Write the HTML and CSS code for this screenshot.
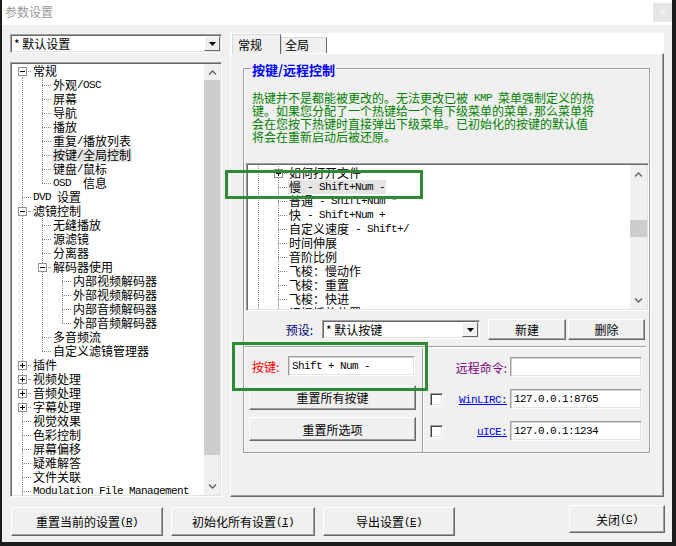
FILE: index.html
```html
<!DOCTYPE html>
<html lang="zh-CN">
<head>
    <meta charset="UTF-8">
    <title>参数设置</title>
    <link rel="stylesheet" href="styles.css">
</head>
<body>
<div class="window">
    <div class="titlebar">
        <span class="title">参数设置</span>
        <span class="close">x</span>
    </div>

    <div class="body">
        <div class="main">
            <div class="side">
                <div class="combo">
                    <span class="val">* 默认设置</span>
                    <span class="drop"><svg width="7" height="4" viewBox="0 0 7 4"><path d="M0 0h7L3.5 4z" fill="#000"/></svg></span>
                </div>
                <div class="tree side-tree">
                    <div class="rows">
                        <div class="row"><span class="c f"><b class="bx"></b></span><span class="tx">常规</span></div>
                        <div class="row"><span class="c v"></span><span class="c t"></span><span class="tx">外观<span class="m">/OSC</span></span></div>
                        <div class="row"><span class="c v"></span><span class="c t"></span><span class="tx">屏幕</span></div>
                        <div class="row"><span class="c v"></span><span class="c t"></span><span class="tx">导航</span></div>
                        <div class="row"><span class="c v"></span><span class="c t"></span><span class="tx">播放</span></div>
                        <div class="row"><span class="c v"></span><span class="c t"></span><span class="tx">重复<span class="m">/</span>播放列表</span></div>
                        <div class="row"><span class="c v"></span><span class="c t"></span><span class="tx sel">按键<span class="m">/</span>全局控制</span></div>
                        <div class="row"><span class="c v"></span><span class="c t"></span><span class="tx">键盘<span class="m">/</span>鼠标</span></div>
                        <div class="row"><span class="c v"></span><span class="c l"></span><span class="tx"><span class="m">OSD  </span>信息</span></div>
                        <div class="row"><span class="c t"></span><span class="tx"><span class="m">DVD </span>设置</span></div>
                        <div class="row"><span class="c t"><b class="bx"></b></span><span class="tx">滤镜控制</span></div>
                        <div class="row"><span class="c v"></span><span class="c t"></span><span class="tx">无缝播放</span></div>
                        <div class="row"><span class="c v"></span><span class="c t"></span><span class="tx">源滤镜</span></div>
                        <div class="row"><span class="c v"></span><span class="c t"></span><span class="tx">分离器</span></div>
                        <div class="row"><span class="c v"></span><span class="c t"><b class="bx"></b></span><span class="tx">解码器使用</span></div>
                        <div class="row"><span class="c v"></span><span class="c v"></span><span class="c t"></span><span class="tx">内部视频解码器</span></div>
                        <div class="row"><span class="c v"></span><span class="c v"></span><span class="c t"></span><span class="tx">外部视频解码器</span></div>
                        <div class="row"><span class="c v"></span><span class="c v"></span><span class="c t"></span><span class="tx">内部音频解码器</span></div>
                        <div class="row"><span class="c v"></span><span class="c v"></span><span class="c l"></span><span class="tx">外部音频解码器</span></div>
                        <div class="row"><span class="c v"></span><span class="c t"></span><span class="tx">多音频流</span></div>
                        <div class="row"><span class="c v"></span><span class="c l"></span><span class="tx">自定义滤镜管理器</span></div>
                        <div class="row"><span class="c t"><b class="bx p"></b></span><span class="tx">插件</span></div>
                        <div class="row"><span class="c t"><b class="bx p"></b></span><span class="tx">视频处理</span></div>
                        <div class="row"><span class="c t"><b class="bx p"></b></span><span class="tx">音频处理</span></div>
                        <div class="row"><span class="c t"><b class="bx p"></b></span><span class="tx">字幕处理</span></div>
                        <div class="row"><span class="c t"></span><span class="tx">视觉效果</span></div>
                        <div class="row"><span class="c t"></span><span class="tx">色彩控制</span></div>
                        <div class="row"><span class="c t"></span><span class="tx">屏幕偏移</span></div>
                        <div class="row"><span class="c t"></span><span class="tx">疑难解答</span></div>
                        <div class="row"><span class="c t"></span><span class="tx">文件关联</span></div>
                        <div class="row"><span class="c t"></span><span class="tx"><span class="m">Modulation File Management</span></span></div>
                    </div>
                    <div class="sbar">
                        <span class="arr up"><svg width="9" height="5" viewBox="0 0 9 5"><path d="M1 4.5 4.5 1 8 4.5" fill="none" stroke="#606060" stroke-width="1.3"/></svg></span>
                        <span class="thumb"></span>
                        <span class="arr dn"><svg width="9" height="5" viewBox="0 0 9 5"><path d="M1 .5 4.5 4 8 .5" fill="none" stroke="#606060" stroke-width="1.3"/></svg></span>
                    </div>
                </div>
            </div>

            <div class="tabs">
                <div class="tabstrip">
                    <span class="tab on">常规</span>
                    <span class="tab">全局</span>
                </div>
                <div class="panel">
                    <div class="group">
                        <div class="legend">按键/远程控制</div>
                        <p class="note">热键并不是都能被更改的。无法更改已被<span class="m"> KMP </span>菜单强制定义的热<br>键。如果您分配了一个热键给一个有下级菜单的菜单<span class="m">,</span>那么菜单将<br>会在您按下热键时直接弹出下级菜单。已初始化的按键的默认值<br>将会在重新启动后被还原。</p>

                        <div class="tree keys">
                            <div class="rows">
                                <div class="row"><span class="c v"></span><span class="c t"><b class="bx p"></b></span><span class="tx">如何打开文件</span></div>
                                <div class="row"><span class="c v"></span><span class="c t"></span><span class="tx sel">慢<span class="m"> - Shift+Num -</span></span></div>
                                <div class="row"><span class="c v"></span><span class="c t"></span><span class="tx">普通<span class="m"> - Shift+Num *</span></span></div>
                                <div class="row"><span class="c v"></span><span class="c t"></span><span class="tx">快<span class="m"> - Shift+Num +</span></span></div>
                                <div class="row"><span class="c v"></span><span class="c t"></span><span class="tx">自定义速度<span class="m"> - Shift+/</span></span></div>
                                <div class="row"><span class="c v"></span><span class="c t"></span><span class="tx">时间伸展</span></div>
                                <div class="row"><span class="c v"></span><span class="c t"></span><span class="tx">音阶比例</span></div>
                                <div class="row"><span class="c v"></span><span class="c t"></span><span class="tx">飞梭：慢动作</span></div>
                                <div class="row"><span class="c v"></span><span class="c t"></span><span class="tx">飞梭：重置</span></div>
                                <div class="row"><span class="c v"></span><span class="c t"></span><span class="tx">飞梭：快进</span></div>
                                <div class="row"><span class="c v"></span><span class="c t"></span><span class="tx">记忆播放位置</span></div>
                            </div>
                            <div class="sbar">
                                <span class="arr up"><svg width="9" height="5" viewBox="0 0 9 5"><path d="M1 4.5 4.5 1 8 4.5" fill="none" stroke="#606060" stroke-width="1.3"/></svg></span>
                                <span class="thumb"></span>
                                <span class="arr dn"><svg width="9" height="5" viewBox="0 0 9 5"><path d="M1 .5 4.5 4 8 .5" fill="none" stroke="#606060" stroke-width="1.3"/></svg></span>
                            </div>
                        </div>

                        <div class="preset">
                            <span class="lbl">预设:</span>
                            <div class="combo">
                                <span class="val">* 默认按键</span>
                                <span class="drop"><svg width="7" height="4" viewBox="0 0 7 4"><path d="M0 0h7L3.5 4z" fill="#000"/></svg></span>
                            </div>
                            <span class="btn">新建</span>
                            <span class="btn del">删除</span>
                        </div>

                        <div class="sep"></div>

                        <div class="lower">
                            <div class="keypart">
                                <div class="keyrow">
                                    <span class="lbl">按键:</span>
                                    <span class="field"><span class="m">Shift + Num -</span></span>
                                </div>
                                <span class="btn big">重置所有按键</span>
                                <span class="btn big second">重置所选项</span>
                            </div>
                            <div class="remote">
                                <span></span>
                                <span class="rl purple">远程命令:</span>
                                <span class="field"></span>

                                <span class="chk"></span>
                                <span class="rl"><span class="link m">WinLIRC:</span></span>
                                <span class="field"><span class="m">127.0.0.1:8765</span></span>

                                <span class="chk"></span>
                                <span class="rl"><span class="link m">uICE:</span></span>
                                <span class="field"><span class="m">127.0.0.1:1234</span></span>
                            </div>
                        </div>
                    </div>
                </div>
            </div>
        </div>

        <div class="footer">
            <span class="btn fb1">重置当前的设置<span class="m">(<u>R</u>)</span></span>
            <span class="btn fb2">初始化所有设置<span class="m">(<u>I</u>)</span></span>
            <span class="btn fb3">导出设置<span class="m">(<u>E</u>)</span></span>
            <span class="btn fclose">关闭<span class="m">(<u>C</u>)</span></span>
        </div>
    </div>

    <div class="mark mark-a"></div>
    <div class="mark mark-b"></div>
</div>
</body>
</html>
```

FILE: styles.css
```css
body {
    margin: 0;
    background: #1c1c1c;
    font-family: "Noto Sans CJK SC", sans-serif;
    font-size: 12px;
    color: #000;
    --dv: repeating-linear-gradient(#8c8c8c 0 1px, transparent 1px 2px);
    --dh: repeating-linear-gradient(90deg, #8c8c8c 0 1px, transparent 1px 2px);
}
.window {
    position: relative;
    width: 670px;
    height: 542px;
    margin-left: 2px;
    background: #f0f0f0;
    display: flex;
    flex-direction: column;
}
.titlebar {
    height: 25px;
    background: #fff;
    display: flex;
    justify-content: space-between;
    align-items: flex-start;
}
.title {
    color: #9a9a9a;
    padding: 5px 0 0 3px;
    line-height: 14px;
}
.close {
    width: 19px;
    height: 19px;
    margin-top: 3px;
    background: #e6e6e6;
    color: #fafafa;
    text-align: center;
    line-height: 17px;
    font-family: "Liberation Sans", sans-serif;
    font-size: 11px;
}
.m {
    font-family: "Liberation Mono", monospace;
    font-size: 11px;
    letter-spacing: -0.6px;
    line-height: 0;
    vertical-align: 2px;
    white-space: pre;
}
.body {
    padding: 8px 8px 6px;
    display: flex;
    flex-direction: column;
}
.main {
    display: flex;
    gap: 8px;
    height: 464px;
}
.side {
    width: 212px;
    display: flex;
    flex-direction: column;
}

/* combo box */
.combo {
    height: 19px;
    box-sizing: border-box;
    display: flex;
    background: #fff;
    border: 1px solid;
    border-color: #a0a0a0 #fff #fff #a0a0a0;
    box-shadow: inset 1px 1px #696969, inset -1px -1px #e3e3e3;
    padding: 1px;
}
.side .combo {
    margin-top: 1px;
}
.combo .val {
    flex: 1;
    padding-left: 2px;
    line-height: 15px;
    white-space: nowrap;
}
.drop {
    width: 16px;
    box-sizing: border-box;
    background: #f0f0f0;
    border: 1px solid;
    border-color: #fff #696969 #696969 #fff;
    display: flex;
    align-items: center;
    justify-content: center;
}

/* tree views */
.tree {
    box-sizing: border-box;
    display: flex;
    overflow: hidden;
    background: #fff;
    border: 1px solid;
    border-color: #a0a0a0 #fff #fff #a0a0a0;
    box-shadow: inset 1px 1px #696969, inset -1px -1px #e3e3e3;
    padding: 1px;
}
.side-tree {
    margin-top: 9px;
    height: 435px;
}
.rows {
    flex: 1;
    overflow: hidden;
}
.row {
    display: flex;
    height: 14px;
    line-height: 14px;
    white-space: nowrap;
}
.c {
    width: 20px;
    height: 14px;
    flex: none;
}
.v {
    background: var(--dv) 10px 0 / 1px 14px no-repeat;
}
.t {
    background: var(--dv) 10px 0 / 1px 14px no-repeat, var(--dh) 10px 7px / 10px 1px no-repeat;
}
.l {
    background: var(--dv) 10px 0 / 1px 8px no-repeat, var(--dh) 10px 7px / 10px 1px no-repeat;
}
.f {
    background: var(--dv) 10px 7px / 1px 7px no-repeat, var(--dh) 10px 7px / 10px 1px no-repeat;
}
.bx {
    display: block;
    width: 9px;
    height: 9px;
    box-sizing: border-box;
    margin: 3px 0 0 6px;
    border: 1px solid #919191;
    background: linear-gradient(#000, #000) center / 5px 1px no-repeat, #fff;
}
.bx.p {
    background: linear-gradient(#000, #000) center / 5px 1px no-repeat, linear-gradient(#000, #000) center / 1px 5px no-repeat, #fff;
}
.tx {
    padding: 0 1px;
}
.sel {
    background: #e5e5e5;
}
.sbar {
    width: 16px;
    flex: none;
    background: #f0f0f0;
    display: flex;
    flex-direction: column;
}
.arr {
    height: 16px;
    display: flex;
    align-items: center;
    justify-content: center;
}
.side-tree .thumb {
    height: 375px;
    background: #cdcdcd;
}
.arr.dn {
    margin-top: auto;
    height: 17px;
}

/* tabs */
.tabs {
    flex: 1;
    display: flex;
    flex-direction: column;
}
.tabstrip {
    height: 20px;
    background: #fff;
    display: flex;
    align-items: flex-end;
    padding-left: 2px;
    position: relative;
    z-index: 1;
}
.tab {
    width: 46px;
    height: 16px;
    box-sizing: border-box;
    line-height: 14px;
    padding-left: 3px;
    background: #f0f0f0;
    border: 1px solid;
    border-color: #d9d9d9 #696969 transparent #d9d9d9;
    border-bottom: 0;
}
.tab.on {
    width: 49px;
    height: 20px;
    margin-bottom: -1px;
    padding: 2px 0 0 5px;
    line-height: 15px;
}
.panel {
    flex: 1;
    border: 1px solid;
    border-color: #fff #696969 #696969 #fff;
    box-shadow: inset -1px -1px #a0a0a0;
    padding: 14px 13px 0 12px;
}
.group {
    height: 385px;
    box-sizing: border-box;
    border: 1px solid #a0a0a0;
    box-shadow: inset 1px 1px #fff, 1px 1px #fff;
}
.legend {
    display: table;
    margin: -6px 0 0 7px;
    padding: 0 1px;
    background: #f0f0f0;
    color: #0000ff;
    font-weight: bold;
    font-size: 13px;
    line-height: 14px;
}
.note {
    margin: 14px 0 0 8px;
    color: #008000;
    line-height: 13px;
    white-space: nowrap;
}
.keys {
    margin: 20px 0 0 2px;
    width: 403px;
    height: 148px;
}
.keys .rows {
    padding-top: 1px;
}
.keys .sbar {
    width: 17px;
}
.keys .arr.up {
    height: 19px;
}
.keys .thumb {
    height: 17px;
    margin-top: 36px;
    background: #cdcdcd;
}

/* buttons and fields */
.btn {
    box-sizing: border-box;
    display: flex;
    align-items: center;
    justify-content: center;
    background: #f0f0f0;
    border: 1px solid;
    border-color: #fff #696969 #696969 #fff;
    box-shadow: inset -1px -1px #a0a0a0;
    white-space: nowrap;
}
.field {
    box-sizing: border-box;
    height: 20px;
    background: #fff;
    border: 1px solid;
    border-color: #a0a0a0 #fff #fff #a0a0a0;
    box-shadow: inset 1px 1px #d0d0d0, inset -1px -1px #e3e3e3;
    padding: 1px 0 0 3px;
    line-height: 16px;
    white-space: nowrap;
}
.preset {
    margin-top: 8px;
    display: flex;
    align-items: center;
    height: 21px;
}
.preset .lbl {
    width: 78px;
    box-sizing: border-box;
    padding-right: 9px;
    text-align: right;
    color: #000080;
}
.preset .combo {
    width: 158px;
    margin-right: 8px;
}
.preset .btn {
    width: 78px;
    height: 21px;
}
.preset .del {
    width: 77px;
    margin-left: 2px;
}
.sep {
    margin: 6px 3px 0 1px;
    border-top: 1px solid #a0a0a0;
    border-bottom: 1px solid #fff;
}
.lower {
    display: flex;
    height: 104px;
}
.keypart {
    width: 178px;
    border-right: 1px solid #a0a0a0;
    box-shadow: 1px 0 #fff;
}
.keyrow {
    display: flex;
    align-items: center;
    height: 20px;
    margin-top: 8px;
}
.keyrow .lbl {
    width: 44px;
    box-sizing: border-box;
    padding-left: 8px;
    color: #f00;
}
.keyrow .field {
    width: 127px;
}
.btn.big {
    width: 167px;
    height: 25px;
    margin: 9px 0 0 5px;
}
.btn.big.second {
    height: 24px;
    margin-top: 7px;
}
.remote {
    padding: 9px 0 0 7px;
    display: grid;
    grid-template-columns: 13px 67px 132px;
    grid-auto-rows: 20px;
    row-gap: 12px;
    align-items: center;
}
.rl {
    text-align: right;
    padding-right: 3px;
    white-space: nowrap;
}
.purple {
    color: #800080;
}
.link {
    color: #0000ff;
    text-decoration: underline;
}
.chk {
    width: 13px;
    height: 13px;
    box-sizing: border-box;
    background: #fff;
    border: 1px solid;
    border-color: #a0a0a0 #fff #fff #a0a0a0;
    box-shadow: inset 1px 1px #404040, inset -1px -1px #e3e3e3;
}

/* footer */
.footer {
    display: flex;
    gap: 8px;
    margin-top: 10px;
    padding-left: 1px;
}
.footer .btn {
    height: 29px;
}
.fb1 {
    width: 152px;
}
.fb2 {
    width: 144px;
}
.fb3 {
    width: 132px;
}
.footer .fclose {
    width: 96px;
    height: 28px;
    margin: -2px -1px 0 auto;
}

/* green annotation frames */
.mark {
    position: absolute;
    box-sizing: border-box;
    border: 3px solid #2f8a35;
}
.mark-a {
    left: 223px;
    top: 170px;
    width: 198px;
    height: 29px;
}
.mark-b {
    left: 230px;
    top: 342px;
    width: 196px;
    height: 49px;
}
```
